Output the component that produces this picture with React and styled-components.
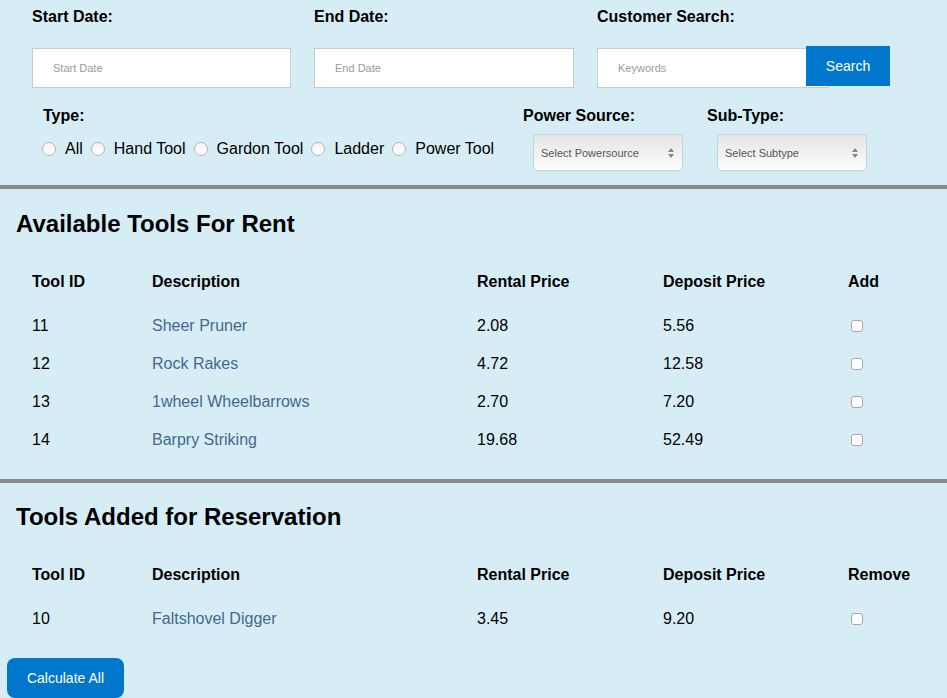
import React from "react";
import styled, { createGlobalStyle } from "styled-components";

const Global = createGlobalStyle`
  html, body { margin: 0; padding: 0; background: #d7edf6; }
  body { font-family: "Liberation Sans", Arial, Helvetica, sans-serif; color: #000; }
  * { box-sizing: border-box; }
`;

const Page = styled.div`
  width: 947px;
  min-height: 698px;
  background: #d7edf6;
`;

const Filters = styled.div`
  padding: 8px 0 0 32px;
  height: 185px;
`;

const TopRow = styled.div`
  display: flex;
`;

const Field = styled.div`
  width: ${(p) => p.$w}px;
  display: flex;
  flex-direction: column;
`;

const Label = styled.div`
  font-size: 16px;
  font-weight: bold;
  line-height: 18px;
  height: 18px;
`;

const TextInput = styled.input`
  margin-top: 22px;
  width: ${(p) => p.$w}px;
  height: 40px;
  border: 1px solid #cacaca;
  background: #fff;
  padding: 0 0 0 20px;
  font-family: inherit;
  font-size: 11px;
  outline: none;
  &::placeholder { color: #9a9a9a; }
`;

const SearchGroup = styled.div`
  display: flex;
  align-items: flex-start;
`;

const SearchButton = styled.button`
  margin-top: 20px;
  margin-left: -23px;
  width: 84px;
  height: 40px;
  border: none;
  background: #0077cc;
  color: #fff;
  font-family: inherit;
  font-size: 14px;
  position: relative;
  padding: 0;
`;

const BottomRow = styled.div`
  display: flex;
  margin-top: 19px;
`;

const TypeGroup = styled.div`
  width: 491px;
  display: flex;
  flex-direction: column;
`;

const TypeLabel = styled(Label)`
  margin-left: 11px;
`;

const Radios = styled.div`
  display: flex;
  align-items: center;
  margin-top: 15px;
  margin-left: 10px;
  height: 18px;
  gap: 8px;
`;

const RadioOption = styled.label`
  display: flex;
  align-items: center;
  gap: 9px;
  font-size: 16px;
`;

const Radio = styled.span`
  width: 14px;
  height: 14px;
  border-radius: 50%;
  border: 1px solid #b4b4b4;
  background: linear-gradient(#f4f4f4, #ffffff);
  display: inline-block;
`;

const SelectGroup = styled.div`
  width: ${(p) => p.$w}px;
  display: flex;
  flex-direction: column;
`;

const SelectBox = styled.div`
  position: relative;
  margin-top: 10px;
  margin-left: 11px;
  width: 148px;
  height: 35px;
  border-radius: 4px;
  background: linear-gradient(#e4e4e4, #fdfdfd);
  box-shadow: 0 0 2px rgba(0, 0, 0, 0.35);
  display: flex;
  align-items: center;
  padding-left: 7px;
  font-size: 11px;
  color: #555;
`;

const Arrows = styled.svg`
  position: absolute;
  right: 8px;
  top: 13px;
`;

const Divider = styled.div`
  height: 4px;
  background: #8a8a8a;
`;

const Section = styled.div`
  padding: ${(p) => p.$top}px 0 ${(p) => p.$bottom}px 0;
`;

const Heading = styled.h2`
  margin: 0 0 26px 16px;
  font-size: 24px;
  line-height: 26px;
  font-weight: bold;
`;

const Row = styled.div`
  display: grid;
  grid-template-columns: 120px 325px 186px 185px 1fr;
  padding-left: 32px;
  height: 38px;
  align-items: center;
  font-size: 16px;
  font-weight: ${(p) => (p.$head ? "bold" : "normal")};
  margin-bottom: ${(p) => (p.$head ? "6px" : "0")};
`;

const ToolLink = styled.a`
  color: #416a8d;
  text-decoration: none;
`;

const Check = styled.span`
  width: 12px;
  height: 12px;
  margin-left: 3px;
  margin-top: 4px;
  border: 1px solid #a8a8a8;
  border-radius: 3px;
  background: #fff;
  display: inline-block;
`;

const CalcButton = styled.button`
  margin-left: 7px;
  width: 117px;
  height: 40px;
  border: none;
  border-radius: 8px;
  background: #0077cc;
  color: #fff;
  font-family: inherit;
  font-size: 14px;
  display: block;
`;

const available = [
  ["11", "Sheer Pruner", "2.08", "5.56"],
  ["12", "Rock Rakes", "4.72", "12.58"],
  ["13", "1wheel Wheelbarrows", "2.70", "7.20"],
  ["14", "Barpry Striking", "19.68", "52.49"],
];

const reserved = [["10", "Faltshovel Digger", "3.45", "9.20"]];

function UpDown() {
  return (
    <Arrows width="6" height="10" viewBox="0 0 6 10">
      <path d="M3 0 L6 4 L0 4 Z" fill="#888" />
      <path d="M3 10 L6 6 L0 6 Z" fill="#888" />
    </Arrows>
  );
}

function ToolTable({ title, last, rows, top, bottom }) {
  return (
    <Section $top={top} $bottom={bottom}>
      <Heading>{title}</Heading>
      <Row $head>
        <div>Tool ID</div>
        <div>Description</div>
        <div>Rental Price</div>
        <div>Deposit Price</div>
        <div>{last}</div>
      </Row>
      {rows.map((r) => (
        <Row key={r[0]}>
          <div>{r[0]}</div>
          <div>
            <ToolLink href="#">{r[1]}</ToolLink>
          </div>
          <div>{r[2]}</div>
          <div>{r[3]}</div>
          <div>
            <Check />
          </div>
        </Row>
      ))}
    </Section>
  );
}

export default function App() {
  return (
    <Page>
      <Global />
      <Filters>
        <TopRow>
          <Field $w={282}>
            <Label>Start Date:</Label>
            <TextInput $w={259} placeholder="Start Date" />
          </Field>
          <Field $w={283}>
            <Label>End Date:</Label>
            <TextInput $w={260} placeholder="End Date" />
          </Field>
          <Field $w={300}>
            <Label>Customer Search:</Label>
            <SearchGroup>
              <TextInput $w={232} placeholder="Keywords" />
              <SearchButton>Search</SearchButton>
            </SearchGroup>
          </Field>
        </TopRow>
        <BottomRow>
          <TypeGroup>
            <TypeLabel>Type:</TypeLabel>
            <Radios>
              {["All", "Hand Tool", "Gardon Tool", "Ladder", "Power Tool"].map((t) => (
                <RadioOption key={t}>
                  <Radio />
                  {t}
                </RadioOption>
              ))}
            </Radios>
          </TypeGroup>
          <SelectGroup $w={184}>
            <Label>Power Source:</Label>
            <SelectBox>
              Select Powersource
              <UpDown />
            </SelectBox>
          </SelectGroup>
          <SelectGroup $w={184}>
            <Label>Sub-Type:</Label>
            <SelectBox>
              Select Subtype
              <UpDown />
            </SelectBox>
          </SelectGroup>
        </BottomRow>
      </Filters>
      <Divider />
      <ToolTable title="Available Tools For Rent" last="Add" rows={available} top={22} bottom={20} />
      <Divider />
      <ToolTable title="Tools Added for Reservation" last="Remove" rows={reserved} top={21} bottom={20} />
      <CalcButton>Calculate All</CalcButton>
    </Page>
  );
}
